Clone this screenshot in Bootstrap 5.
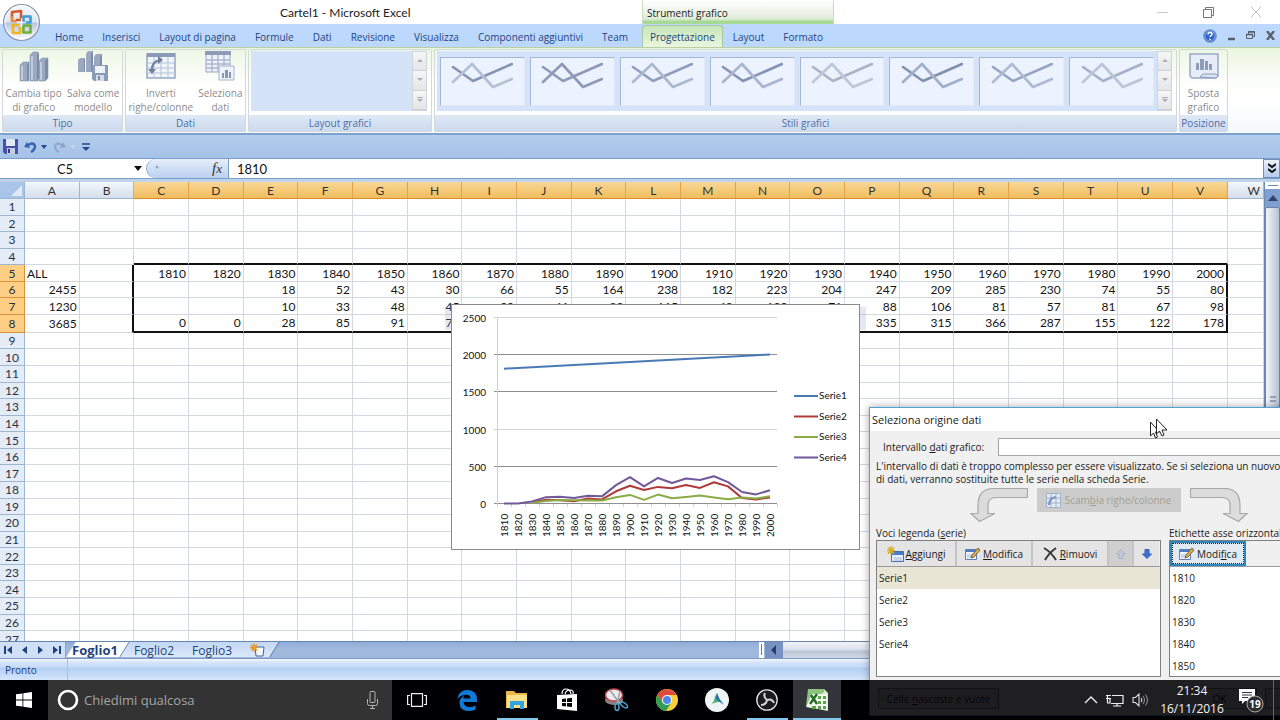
<!DOCTYPE html>
<html lang="it">
<head>
<meta charset="utf-8">
<meta name="viewport" content="width=device-width, initial-scale=1">
<title>Cartel1 - Microsoft Excel</title>
<link href="https://cdn.jsdelivr.net/npm/bootstrap@5.3.0/dist/css/bootstrap.min.css" rel="stylesheet">
<style>
:root{--ui:"Open Sans","Noto Sans",sans-serif;--grid:Lato,"Open Sans",sans-serif}
body{font:10px/14px var(--ui);background:#020308;color:#1a1a1a}
button{font:inherit;color:inherit;background:none;border:0;padding:0}
svg{display:block;flex:none}
/* title bar */
.titlebar{height:24px;background:#fff}
.doc-title{width:642px;padding-left:280px;font:12px/25px var(--grid);color:#222}
.ctx{width:192px;padding:5px 4px 0;line-height:16px;border:solid #c9dcc0;border-width:0 1px;background:linear-gradient(#fff,#eaf1e4 60%,#dbebd2 80%,#a3d891 90%,#a9dc98)}
.winbtns{gap:35px;padding-right:18px}
.orb{left:2px;top:3px;z-index:5}
/* tabs */
.tabstrip{height:23px;background:#bdd8fd;padding-left:46px;gap:1px;color:#1d4580}
.tabstrip a{color:inherit;text-decoration:none;padding:0 9px;line-height:26px}
.tabstrip a.current{background:linear-gradient(#c6e5b8,#eaf6e0);border:1px solid #a9c99c;border-bottom:0;border-radius:3px 3px 0 0;margin:1px 0 0 4px;padding:0 7px;line-height:23px}
.mdi{gap:11px;padding-right:5px}
/* ribbon */
.ribbon{height:88px;padding:1px 2px 1px;gap:2px;background:linear-gradient(#eaf6de,#fbfdf9 35%,#fff 60%,#f6f8fb);border-top:1px solid #bccda0;border-bottom:2px solid #7ea2d0}
.grp{border:1px solid #d3d8dc;border-radius:2px;background:linear-gradient(#edf7e6,#fff 45%);min-width:0}
.grp h2{font:10px/16px var(--ui);margin:0;text-align:center;color:#4a6ea8;background:linear-gradient(#dfe8f5,#ccdaef);white-space:nowrap}
.grp-s{width:121px}.grp-m{width:184px}.grp-p{width:49px;margin-right:50px}
.big{color:#8c8c8c;line-height:14px;text-align:center;flex:auto;padding-bottom:1px}
.big svg{margin:0 auto 4px}
.gallery{background:#d4e3f8;margin:1px 0 4px 2px;min-width:0}
.thumbs{padding:0 3px;gap:5px}
.thumb{flex:1;min-width:0;background:#ecf2fe;border:1px solid #dfe9f9;border-top-color:#a3b6d3;border-left-color:#a3b6d3;margin:6px 0 5px}
.spin{width:15px;margin:1px 4px 4px 0;border:1px solid #d0d4da}
.spin button{flex:1;background:linear-gradient(#f6f6f6,#e4e5e8);border-bottom:1px solid #cdd1d8;display:flex;align-items:center;justify-content:center}
/* quick access, formula bar */
.qat{height:24px;background:linear-gradient(#b1cdec,#a5c2e8);border-bottom:1px solid #7c9cc8;padding-left:3px;gap:6px}
.fbar{height:20px;background:#fff;border-bottom:1px solid #7c9cc8}
.fbar input{font:13px/18px var(--grid);border:0;outline:0;color:#111;background:#fff;min-width:0}
.namebox{width:130px;text-align:center}
.fxcell{width:83px;background:#fff;border-right:1px solid #7c9cc8}
.fxpill{background:linear-gradient(#e6effb,#b9d0f0);border-left:1px solid #8aa6cc;border-radius:10px 0 0 10px;padding:0 6px 0 8px}
.fx{font:italic 15px/18px "Liberation Serif",serif;color:#333}
.expand{width:17px;background:linear-gradient(#eaf1fb,#b5cbea);border:1px solid #6f8fbd}
/* sheet */
.sheetwrap{flex:1 1 0;background:#fff;border-top:3px solid #bfd4ea;min-height:0}
.pane{min-width:0}
.cells{table-layout:fixed;width:100%;height:466px;border-collapse:separate;border-spacing:0;font:12px/14px var(--grid);color:#151515}
.cells th,.cells td{padding:0 2px;text-align:right;vertical-align:middle;white-space:nowrap;overflow:hidden;font-weight:400;border:solid #d2d8e2;border-width:0 1px 1px 0;line-height:13px}
.cells thead th{height:17px;text-align:center;background:linear-gradient(#f3f7fc,#d5deeb);border-color:#9eb6ce;color:#333}
.cells tbody th{text-align:center;background:#e4ecf7;border-color:#9eb6ce;color:#28323e}
.cells thead th.sel{background:linear-gradient(#f9d796,#f1bd5f);border-color:#d8a04d #e2a349 #dc8c28}
.cells tbody th.sel{background:#fdce83;border-color:#d9933a}
.cells thead th.corner{background:#a9c4e9}
.cells .l{text-align:left}
.cells .et{border-bottom:2px solid #111}.cells .er{border-right:2px solid #111}
.cells thead th.cut{text-align:right;padding-right:3px}
.c0{width:25px}.cl{width:36px}
.ghost{left:445px;top:125px;width:421px;height:23px;background:rgba(150,160,205,.25)}
.chart{left:451px;top:122px;width:409px;height:246px;background:#fff;border:1px solid #8a8a8a}
.chart text{font:10px Lato,sans-serif;fill:#111}
.vscroll{width:16px;background:#8fa9d2;border-left:1px solid #6f8ab4;padding-bottom:50px}
.vthumb{flex:1;border:1px solid #6c83a8;border-radius:2px;background:linear-gradient(90deg,#f2f5fa,#cfd7e4 60%,#b4c0d3)}
/* sheet tabs, status */
.sheettabs{height:17px;background:linear-gradient(#8fabd6,#a1b8dd 40%);border-top:1px solid #6885b0;font:12px/17px var(--ui);color:#1f437c;isolation:isolate}
.navs{width:66px;background:#cfe0f7;border-right:1px solid #8aa6cc;padding:0 4px}
.stab{position:relative;padding:0 9px}
.stab::before{content:"";position:absolute;z-index:-1;inset:0 0 1px -8px;transform:skewX(-32deg);background:linear-gradient(#c3d7f3,#dce9fa);border-right:1px solid #5f7fb0}
.stab.on{font-weight:700;padding:0 7px 0 6px;font-size:13px;z-index:1}
.stab.on::before{background:#fff;left:5px}
.hscroll{width:521px}
.statusbar{height:22px;background:linear-gradient(#f2f7fe,#d3e3fa 18%,#cadcf8 35%,#b4d0f6 45%,#c4daf9 75%,#d8e6fb);border-top:1px solid #7d97bf;padding-left:5px;line-height:22px;color:#1d3c70}
.statusbar span{width:63px;border-right:1px solid #a9c2e4}
/* dialog */
.dlg{left:869px;top:407px;width:480px;height:309px;background:#f0f0f0;border:1px solid #4aa3d4;box-shadow:0 0 8px rgba(0,0,0,.35);z-index:10;padding-left:6px}
.dlg-title{height:23px;margin-left:-6px;padding:0 20px 0 2px;background:#fff;font:11px/24px var(--ui)}
.closers{gap:32px}
.dlg-row{padding:7px 8px 0 0}
.dlg label{padding-left:7px;width:122px}
.dlg .range{height:18px;border:1px solid #a5a5a5;background:#fff;min-width:0}
.dlg .note{line-height:13px;white-space:nowrap;overflow:hidden}
.swaprow{gap:9px;height:40px;padding:2px 7px 0 0}
.lists{gap:8px}
.swap{width:144px;height:24px;background:#cccccc;color:#a3a08c}
.lbl{line-height:14px;white-space:nowrap}
.lb{border:1px solid #7f7f7f;background:#fff;height:137px}
.lb-l{width:285px}.lb-r{width:174px}
.lbtools{height:26px;background:#f0f0f0;border-bottom:1px solid #9a9a9a}
.tool{background:#e4e4e4;border-right:2px solid #c4c4c4;gap:2px;width:76px;flex:none}
.tool.wide{width:80px}.tool.arrow{width:25px}.tool.off{background:#cfcfcf}
.tool.focus{background:#e2eaf1;border:2px solid #2c87c0;outline:1px dotted #222;outline-offset:-3px}
.lb li{height:22px;line-height:23px;padding-left:2px}
.lb li.on{background:#e9e6d6}
.dlg-foot{padding:11px 8px 0 2px}
.dbtn{border:1px solid #888;background:#dcdcdc;height:21px;width:75px}
.dbtn.wide{width:121px}
/* taskbar */
.taskbar{height:40px;background:rgba(0,0,3,.87);position:relative;z-index:20;color:#f4f4f4}
.start{width:48px}
.search{width:344px;background:#333;padding:0 12px 0 7px;gap:1px}
.search input{background:none;border:0;outline:0;color:#a5a5a5;font:13px/20px var(--ui);min-width:0}
.search input::placeholder{color:#a5a5a5;opacity:1}
.apps{gap:2px;padding-left:1px}
.app{width:48px;display:flex;align-items:center;justify-content:center;border-bottom:2px solid transparent;border-top:2px solid transparent}
.app.run::after{content:"";position:absolute;bottom:0;width:41px;height:2px;background:#84c8ec}
.app.act{background:#33353b;border-bottom-color:#84c8ec}
.clock{width:70px;font:12px/18px var(--ui);text-align:center}
.edge{width:7px;border-left:1px solid #666}
.cursor{left:1149px;top:418px;z-index:30}
</style>
</head>
<body class="vh-100 d-flex flex-column overflow-hidden position-relative m-0">

<header class="position-relative flex-shrink-0">
  <div class="titlebar d-flex">
    <div class="doc-title flex-shrink-0">Cartel1 - Microsoft Excel</div>
    <div class="ctx flex-shrink-0">Strumenti grafico</div>
    <div class="winbtns d-flex align-items-center ms-auto">
      <button aria-label="Riduci a icona"><svg width="11" height="12"><path d="M0 6.500h11" stroke="#c9c9c9"/></svg></button>
      <button aria-label="Ripristina"><svg width="12" height="12" fill="none" stroke="#777"><path d="M.5 3.500h8v8h-8zM2.500 3.500v-2h8v8h-2"/></svg></button>
      <button aria-label="Chiudi"><svg width="12" height="12"><path d="M1 1l10 10M11 1L1 11" stroke="#c4c4c4"/></svg></button>
    </div>
  </div>
  <button class="orb position-absolute" aria-label="Pulsante Office">
    <svg width="39" height="39" viewBox="0 0 39 39"><defs><linearGradient id="og" x1="0" y1="0" x2="0" y2="1"><stop offset="0" stop-color="#f8fafc"/><stop offset=".48" stop-color="#dfe5ee"/><stop offset=".52" stop-color="#b9c6da"/><stop offset="1" stop-color="#fff"/></linearGradient></defs>
      <circle cx="19.500" cy="19.500" r="18" fill="url(#og)" stroke="#8797b3" stroke-width="1.200"/><circle cx="19.500" cy="19.500" r="16.500" fill="none" stroke="#fff" stroke-opacity=".7"/>
      <g fill="none" stroke-width="2.600" stroke-linejoin="round"><path d="M10 15V9l9-1v9h-5" stroke="#d9582b"/><path d="M10 13v5h4" stroke="#e98a3c"/><path d="M21.500 13.500h7v6h-7z" stroke="#3e9bd5"/><path d="M17 22h-6v8h7v-6" stroke="#f0b323"/><path d="M21.500 22.500h7v7h-7z" stroke="#6fae3b"/></g>
      <path d="M19.500 15v9M15 19.500h9" stroke="#f5f5f0" stroke-width="1.300"/></svg>
  </button>
  <nav class="tabstrip d-flex">
    <a href="#">Home</a><a href="#">Inserisci</a><a href="#">Layout di pagina</a><a href="#">Formule</a><a href="#">Dati</a><a href="#">Revisione</a><a href="#">Visualizza</a><a href="#">Componenti aggiuntivi</a><a href="#">Team</a><a href="#" class="current">Progettazione</a><a href="#">Layout</a><a href="#">Formato</a>
    <div class="mdi d-flex align-items-center ms-auto">
      <button aria-label="Guida"><svg width="14" height="14"><circle cx="7" cy="7" r="6.300" fill="#2e62c8" stroke="#7f93b8"/><circle cx="7" cy="7" r="5" fill="none" stroke="#9fc0f5" stroke-width=".8"/><path d="M5 5.500q0-2 2-2t2 1.700q0 1-1.200 1.600-.8.400-.8 1.200M7 9.500v1.500" stroke="#fff" stroke-width="1.400" fill="none"/></svg></button>
      <button aria-label="Riduci"><svg width="7" height="11"><path d="M0 9h7" stroke="#555e6c" stroke-width="2.500"/></svg></button>
      <button aria-label="Ripristina finestra"><svg width="9" height="9" fill="none" stroke="#555e6c"><path d="M2.500 3V.500h6v5H7M.500 3.500h6v4h-6z"/><path d="M2 1h7M0 3.500h7" stroke-width="1.600"/></svg></button>
      <button aria-label="Chiudi finestra"><svg width="9" height="9"><path d="M1 0l7 9M8 0L1 9" stroke="#5a6270" stroke-width="2.400"/></svg></button>
    </div>
  </nav>
</header>

<section class="ribbon d-flex flex-shrink-0">
  <div class="grp grp-s d-flex flex-column flex-shrink-0">
    <div class="d-flex flex-grow-1">
      <button class="big"><svg width="30" height="31" viewBox="0 0 30 31"><g fill="#9ba9c0" stroke="#8494ae" stroke-width=".6"><path d="M1 14l3-3h6v19H1z"/><path d="M11 4l3-3h5v29h-8z"/><path d="M20 10l3-3h6v20l-3 3h-6z"/></g><path d="M10 11v16l-2 3V14zM20 1v26l-2 3V4zM29 7v20l-3 3V10z" fill="#7c8ca7"/><path d="M2 15h2v14H2zM12 5h2v24h-2zM21 11h2v18h-2z" fill="#c1cbdb"/></svg>Cambia tipo<br>di grafico</button>
      <button class="big"><svg width="30" height="31" viewBox="0 0 30 31"><g fill="#9ba9c0"><path d="M0 9l2-2h5v14H0z"/><path d="M8 3l2-3h5v21H8z"/><path d="M16 6l2-3h6v13h-8z"/></g><path d="M7 7v13l-1 1V9zM15 0v20l-2 1V3zM24 3v13h-2V6z" fill="#7c8ca7"/><path d="M14 14h16v16H16l-2-2z" fill="#8b9ab5"/><path d="M17 15h10v7H17z" fill="#eef2f9"/><path d="M18 24h8v6h-8z" fill="#d4dcea"/><path d="M20 25h2v4h-2z" fill="#7f8fab"/></svg>Salva come<br>modello</button>
    </div><h2>Tipo</h2>
  </div>
  <div class="grp grp-s d-flex flex-column flex-shrink-0">
    <div class="d-flex flex-grow-1">
      <button class="big"><svg width="30" height="31" viewBox="0 0 30 31"><path d="M1 3h28v24H1z" fill="#f0f4fb" stroke="#98a7c2" stroke-width="1.500"/><path d="M1 2h28v4H1z" fill="#8c9bb8"/><path d="M1 12h28M1 17h28M1 22h28M8 6v21M15 6v21M22 6v21" stroke="#b5c1d6"/><path d="M6 20q-1-9 8-11" fill="none" stroke="#6f809e" stroke-width="2"/><path d="M12 5l5 4-5 4zM2 18l4 5 4-5z" fill="#6f809e"/></svg>Inverti<br>righe/colonne</button>
      <button class="big"><svg width="30" height="31" viewBox="0 0 30 31"><path d="M1 1h24v20H1z" fill="#eff3fb" stroke="#98a7c2"/><path d="M0 0h26v4H0z" fill="#8c9bb8"/><path d="M1 9h24M1 13h24M1 17h24M7 4v17M13 4v17M19 4v17" stroke="#aab7cf" stroke-width="1.400"/><path d="M14 15h15v14H14z" fill="#eef3fb" stroke="#a6b4cc"/><path d="M17 22h2v5h-2zM20 19h3v8h-3zM24 21h2v6h-2z" fill="#8897b3"/></svg>Seleziona<br>dati</button>
    </div><h2>Dati</h2>
  </div>
  <div class="grp grp-m d-flex flex-column flex-shrink-0">
    <div class="d-flex flex-grow-1">
      <div class="gallery flex-grow-1"></div>
      <div class="spin d-flex flex-column" data-spin></div>
    </div><h2>Layout grafici</h2>
  </div>
  <div class="grp flex-grow-1 d-flex flex-column">
    <div class="d-flex flex-grow-1">
      <div class="gallery thumbs flex-grow-1 d-flex" id="styles"></div>
      <div class="spin d-flex flex-column" data-spin></div>
    </div><h2>Stili grafici</h2>
  </div>
  <div class="grp grp-p d-flex flex-column flex-shrink-0">
    <button class="big"><svg width="30" height="31" viewBox="0 0 30 31"><path d="M1 3h28v22l-2 2H3l-2-2z" fill="#e6edf9" stroke="#98a8c6" stroke-width="1.500"/><path d="M7 12h3v7H7zM11 8h4v11h-4zM16 10h3v9h-3zM20 13h3v6h-3z" fill="#8e9dba"/><path d="M11 26l3-3h13l2 2-2 2z" fill="#dbe4f4" stroke="#8b9bba"/></svg>Sposta<br>grafico</button>
    <h2>Posizione</h2>
  </div>
</section>

<div class="qat d-flex align-items-center flex-shrink-0">
  <button aria-label="Salva"><svg width="15" height="15"><path d="M0 0h15v15H2l-2-2z" fill="#4a4fa8"/><path d="M3 0h9v7H3z" fill="#dfe6f6"/><path d="M4 9h8v6H4z" fill="#c5cbe2"/><path d="M5 10h2v4H5z" fill="#34397f"/></svg></button>
  <button aria-label="Annulla" class="d-flex align-items-center gap-1"><svg width="13" height="13"><path d="M3 6q6-5 8 0 0 4-4 6" fill="none" stroke="#3a62b4" stroke-width="2.400"/><path d="M0 7l6 1-3-6z" fill="#3a62b4"/></svg><svg width="6" height="4"><path d="M0 0h6L3 4z" fill="#234a8a"/></svg></button>
  <button aria-label="Ripeti" class="d-flex align-items-center gap-1"><svg width="13" height="13"><path d="M10 6Q4 1 2 6q0 4 4 6" fill="none" stroke="#8ea5c6" stroke-width="2"/><path d="M13 7l-6 1 3-6z" fill="#8ea5c6"/></svg><svg width="6" height="4"><path d="M0 0h6L3 4z" fill="#c9d6e8"/></svg></button>
  <button aria-label="Personalizza"><svg width="8" height="8"><path d="M0 1h8" stroke="#234a8a" stroke-width="1.500"/><path d="M0 4h8L4 8z" fill="#234a8a"/></svg></button>
</div>

<div class="fbar d-flex flex-shrink-0">
  <input class="namebox" value="C5" aria-label="Casella nome">
  <button class="d-flex align-items-center px-1" aria-label="Elenco nomi"><svg width="8" height="5"><path d="M0 0h8L4 5z" fill="#111"/></svg></button>
  <div class="fxcell d-flex"><div class="fxpill flex-grow-1 d-flex justify-content-between"><svg class="mt-1" width="5" height="8"><circle cx="2" cy="4" r="1.500" fill="#8fa9cf"/></svg><button class="fx" aria-label="Inserisci funzione">f<small>x</small></button></div></div>
  <input class="flex-grow-1 ps-2" value="1810" aria-label="Barra della formula">
  <button class="expand d-flex align-items-center justify-content-center" aria-label="Espandi"><svg width="8" height="11"><path d="M0 1l4 3 4-3M0 6l4 3 4-3" fill="none" stroke="#111" stroke-width="2"/></svg></button>
</div>

<main class="sheetwrap d-flex overflow-hidden">
  <div class="pane flex-grow-1 overflow-hidden position-relative">
    <table class="cells" id="cells"></table>
    <div class="ghost position-absolute"></div>
    <div class="chart position-absolute"><svg id="chart" width="407" height="244" viewBox="452 305 407 244" role="img" aria-label="Grafico a linee"></svg></div>
  </div>
  <div class="vscroll d-flex flex-column">
    <svg width="15" height="25"><path d="M0 0h15v7H0z" fill="#fff"/><path d="M3 3.500h10" stroke="#6c8cb8"/><path d="M0 7h15v18H0z" fill="#7f9fd0"/><path d="M3 19l5-6 5 6z" fill="#34416b"/></svg>
    <div class="vthumb d-flex align-items-center justify-content-center"><svg width="6" height="7"><path d="M0 1h6M0 5h6" stroke="#7f8da6" stroke-width="1.500"/></svg></div>
  </div>
</main>

<div class="sheettabs d-flex flex-shrink-0">
  <div class="navs d-flex align-items-center justify-content-between flex-shrink-0">
    <button aria-label="Primo"><svg width="8" height="8"><path d="M8 0v8L3 4zM0 0h2v8H0z" fill="#1f437c"/></svg></button>
    <button aria-label="Precedente"><svg width="6" height="8"><path d="M5 0v8L0 4z" fill="#1f437c"/></svg></button>
    <button aria-label="Successivo"><svg width="6" height="8"><path d="M1 0v8l5-4z" fill="#1f437c"/></svg></button>
    <button aria-label="Ultimo"><svg width="8" height="8"><path d="M0 0v8l5-4zM6 0h2v8H6z" fill="#1f437c"/></svg></button>
  </div>
  <button class="stab on">Foglio1</button><button class="stab">Foglio2</button><button class="stab">Foglio3</button>
  <button class="stab" aria-label="Nuovo foglio"><svg width="16" height="14"><path d="M5 4h9l-1 9H6z" fill="#f5f8fd" stroke="#42639b"/><path d="M4 0v9M0 4.500h8M1 1.500l6 6M7 1.500l-6 6" stroke="#e59a2c" stroke-width="1.300"/></svg></button>
  <div class="hscroll ms-auto d-flex flex-shrink-0">
    <svg width="24" height="16"><path d="M0 0h5v16H0z" fill="#fff"/><path d="M2.500 2v11" stroke="#5f7fb0"/><path d="M6 0h18v16H6z" fill="#7693c4"/><path d="M17 3v10l-5-5z" fill="#2b3c66"/></svg>
    <div class="flex-grow-1" style="background:linear-gradient(#f1f3f7,#dde2ea 45%,#bcc6d6 60%,#d2d9e5)"></div>
  </div>
</div>
<div class="statusbar d-flex flex-shrink-0"><span>Pronto</span></div>

<section class="dlg position-absolute" role="dialog" aria-label="Seleziona origine dati">
  <div class="dlg-title d-flex justify-content-between"><span>Seleziona origine dati</span><span class="closers d-flex"><button>?</button><button>×</button></span></div>
  <div class="dlg-row d-flex align-items-center"><label for="rng">Intervallo <u>d</u>ati grafico:</label><input id="rng" class="range flex-grow-1"></div>
  <p class="note mb-0 mt-1">L'intervallo di dati è troppo complesso per essere visualizzato. Se si seleziona un nuovo intervallo<br>di dati, verranno sostituite tutte le serie nella scheda Serie.</p>
  <div class="swaprow d-flex justify-content-center">
    <svg width="58" height="34"><path d="M57.500.500v9H26q-8 0-8 8v8h7L9.500 33.500 1 25.500h7v-8Q8 .500 24 .500z" fill="#dcdcdc" stroke="#a8a8a8" stroke-width="1.200"/></svg>
    <button class="swap d-flex align-items-center justify-content-center gap-1" disabled><svg width="15" height="15"><path d="M.5.500h14v14H.500z" fill="#e5ebf3" stroke="#9fb1cc"/><path d="M0 5h15M0 10h15M5 0v15M10 0v15" stroke="#9fb1cc"/><path d="M3 12q0-7 7-8" fill="none" stroke="#7b93bd" stroke-width="2"/></svg><span>Scam<u>b</u>ia righe/colonne</span></button>
    <svg width="58" height="34"><path d="M.500.500v9H32q8 0 8 8v8h-7l15.500 8 8.500-8h-7v-8Q50 .500 34 .500z" fill="#dcdcdc" stroke="#a8a8a8" stroke-width="1.200"/></svg>
  </div>
  <div class="lists d-flex">
    <div><div class="lbl">Voci legenda (<u>s</u>erie)</div>
      <div class="lb lb-l">
        <div class="lbtools d-flex">
          <button class="tool wide d-flex align-items-center justify-content-center"><svg width="17" height="16"><path d="M4.500 5.500h12v10h-12z" fill="#eaf1fb" stroke="#4670b0"/><path d="M5 6h11v3H5z" fill="#4a7bc8"/><path d="M7 12h8M7 14h8" stroke="#9db6dc"/><path d="M4 0v9M0 4.500h8M1 1.500l6 6M7 1.500l-6 6" stroke="#d8ae1c" stroke-width="1.400"/></svg><span><u>A</u>ggiungi</span></button>
          <button class="tool d-flex align-items-center justify-content-center" data-edit><span><u>M</u>odifica</span></button>
          <button class="tool d-flex align-items-center justify-content-center"><svg width="15" height="14"><path d="M1 1q7 4 12 12M13 1Q6 6 2 13" stroke="#3a3a3a" stroke-width="2" fill="none"/></svg><span><u>R</u>imuovi</span></button>
          <button class="tool arrow off d-flex align-items-center justify-content-center" aria-label="Su"><svg width="10" height="10"><path d="M5 .5L9.500 5H7v4.500H3V5H.500z" fill="#c3c9d6" stroke="#a9b1c4"/></svg></button>
          <button class="tool arrow d-flex align-items-center justify-content-center border-0" aria-label="Giù"><svg width="10" height="10"><path d="M5 9.500L.500 5H3V.500h4V5h2.500z" fill="#3f6fd6" stroke="#345cb4"/></svg></button>
        </div>
        <ul class="list-unstyled mb-0"><li class="on">Serie1</li><li>Serie2</li><li>Serie3</li><li>Serie4</li></ul>
      </div></div>
    <div><div class="lbl">Etichette asse orizzontale (categorie)</div>
      <div class="lb lb-r">
        <div class="lbtools d-flex"><button class="tool focus d-flex align-items-center justify-content-center" data-edit><span>Modi<u>f</u>ica</span></button></div>
        <ul class="list-unstyled mb-0 ps-0"><li>1810</li><li>1820</li><li>1830</li><li>1840</li><li>1850</li></ul>
      </div></div>
  </div>
  <div class="dlg-foot d-flex justify-content-between"><button class="dbtn wide">Celle <u>n</u>ascoste e vuote</button><span class="d-flex gap-2"><button class="dbtn">OK</button><button class="dbtn">Annulla</button></span></div>
</section>

<footer class="taskbar d-flex flex-shrink-0">
  <button class="start d-flex align-items-center justify-content-center" aria-label="Start"><svg width="16" height="16" fill="#fff"><path d="M0 2.300l6.500-.9v6.100H0zM7.300 1.300L16 0v7.500H7.300zM0 8.400h6.500v6.200L0 13.700zM7.300 8.400H16V16l-8.700-1.200z"/></svg></button>
  <div class="search d-flex align-items-center flex-shrink-0">
    <svg width="26" height="26"><circle cx="13" cy="13" r="9" fill="none" stroke="#fff" stroke-width="2.600"/></svg>
    <input class="flex-grow-1" placeholder="Chiedimi qualcosa" aria-label="Chiedimi qualcosa">
    <svg width="15" height="18" fill="none" stroke="#b5b5b5"><rect x="5" y=".5" width="5" height="11" rx="1"/><path d="M2.500 8v4.500q0 2 2 2h6q2 0 2-2V8M7.500 14.500v3M5 17.500h5"/></svg>
  </div>
  <div class="apps d-flex">
    <button class="app" aria-label="Visualizzazione attività"><svg width="20" height="14" fill="none" stroke="#eee" stroke-width="1.200"><path d="M4.500.600h11v12.800h-11zM3 2.500H.600v9H3M17 2.500h2.400v9H17"/></svg></button>
    <button class="app" aria-label="Edge"><svg width="20" height="21" viewBox="0 0 20 21"><path d="M0 9Q2 0 10.500 0 20 0 20 10v2H6.500q.5 5 6 5 3.500 0 6-1.600v4Q15.500 21 11.500 21 3 21 2.500 13 2.500 8 7.500 5.500 6.500 6.500 6.300 8.500h7.200Q13.500 4.800 9.500 4.800 4 4.800 0 9z" fill="#0f7ad8"/></svg></button>
    <button class="app run" aria-label="Esplora file"><svg width="22" height="20"><path d="M0 1h8l2 2h11v15H0z" fill="#e8b84a"/><path d="M1 5h20v13H1z" fill="#fbe08a"/><path d="M4 19v-8h14v8h-4v-4H8v4z" fill="#2fa6e0"/></svg></button>
    <button class="app" aria-label="Store"><svg width="22" height="24"><path d="M1 7l20-1v17L1 21z" fill="#fff"/><path d="M6 6q0-5 4-5t5 5M9 6q1-4 5-4t3 4" fill="none" stroke="#fff" stroke-width="1.200"/><path d="M6 11l4-.5V14H6zM11 10.400l5-.6V14h-5zM6 15h4v3.400L6 18zM11 15h5v4l-5-.5z" fill="#05060a"/></svg></button>
    <button class="app" aria-label="Strumento di cattura"><svg width="24" height="24"><ellipse cx="9" cy="12" rx="9" ry="5" fill="#8c8084"/><ellipse cx="9" cy="7" rx="8.500" ry="6" fill="#f0eaea" stroke="#c84650" stroke-width="1.500"/><path d="M5 2l10 14M15 3l-3 13" stroke="#98a5b3" stroke-width="1.600"/><ellipse cx="12" cy="19" rx="2" ry="3.500" fill="none" stroke="#4aa0c8" stroke-width="1.500"/><ellipse cx="19" cy="17" rx="4" ry="2" transform="rotate(35 19 17)" fill="none" stroke="#4aa0c8" stroke-width="1.500"/></svg></button>
    <button class="app" aria-label="Chrome"><svg width="22" height="22" viewBox="0 0 22 22"><circle cx="11" cy="11" r="11" fill="#f9cf3a"/><path d="M1.500 5.500A11 11 0 0 0 10 22l5.300-8.500H6.500z" fill="#2f9e57"/><path d="M1.500 5.500l4.800 8L11 6h9.500A11 11 0 0 0 1.500 5.500z" fill="#dd4b3e"/><circle cx="11" cy="11" r="5" fill="#fff"/><circle cx="11" cy="11" r="4" fill="#4a87ee"/></svg></button>
    <button class="app" aria-label="Applicazione"><svg width="24" height="24"><circle cx="12" cy="12" r="12" fill="#f1f4f4"/><path d="M5 17q4-2 5-8l2-4q2 7 7 11-4-3-7-2-3 0-7 3z" fill="#2a9d8f"/><path d="M12 5q2 7 7 12-5-3-8-7z" fill="#2c6fae"/><path d="M5 17q4-2 5-6l3 3q-4 0-8 3z" fill="#54b86a"/></svg></button>
    <button class="app run" aria-label="OBS"><svg width="22" height="22"><circle cx="11" cy="11" r="10.200" fill="#1b1b1e" stroke="#e6e6e6" stroke-width="1.300"/><path d="M9 4q-2 4 2 7 M11 11q5-2 7 3M11 11q-1 5-6 5" fill="none" stroke="#d5d5d5" stroke-width="2"/></svg></button>
    <button class="app act" aria-label="Excel"><svg width="24" height="22"><path d="M3 0h16l4 4v18l-20-4z" fill="#d6ecc8"/><path d="M3 0h16v3L1 17z" fill="#8cc47c"/><path d="M7 5h15v16L1 18z" fill="#f4faef"/><path d="M13 7h3v3h-3zM18 7h3v3h-3zM13 12h3v3h-3zM18 12h3v3h-3zM7 17h4v3H7zM13 17h3v3h-3zM18 17h3v3h-3z" fill="#5ba34a"/><path d="M6 6l6 9M12 5l-7 10" stroke="#27692a" stroke-width="2.400"/></svg></button>
  </div>
  <div class="ms-auto d-flex align-items-center gap-2">
    <svg width="14" height="8"><path d="M1 7l6-6 6 6" fill="none" stroke="#eee" stroke-width="1.400"/></svg>
    <svg width="18" height="13" fill="none" stroke="#eee" stroke-width="1.200"><path d="M6 1.500h11v8H5M7 12h8M11 9.500V12M0 1.500h5M0 4.500h5M1.500 1v8M4 4v5H1"/></svg>
    <svg width="17" height="14" fill="none" stroke="#ddd" stroke-width="1.100"><path d="M1 4.500h2.500L7 1v12L3.500 9.500H1zM9 5q1.500 2 0 4"/><path d="M11 3q3 4 0 8M13.500 1.500q4 5.500 0 11" stroke="#888"/></svg>
    <div class="clock">21:34<br>16/11/2016</div>
    <svg class="ms-1" width="26" height="26"><path d="M0 2h16v12H6l-3 3v-3H0z" fill="#fff"/><path d="M3 5.500h10M3 8h10M3 10.500h6" stroke="#333"/><circle cx="16" cy="17" r="8" fill="#2d2d2d" stroke="#aaa"/><text x="16" y="21" text-anchor="middle" font-family="Open Sans" font-size="10" font-weight="700" fill="#fff">19</text></svg>
    <div class="edge align-self-stretch"></div>
  </div>
</footer>

<svg class="cursor position-absolute" width="20" height="24" fill="#fff" stroke="#222"><path d="M1.500 4v14l3-3 2 5 2-1-2-5h4z"/><path d="M7.500 1v15l3-3 2.500 5 2-1-2-5h5z"/></svg>

<script src="https://cdn.jsdelivr.net/npm/bootstrap@5.3.0/dist/js/bootstrap.bundle.min.js"></script>
<script>
const years = Array.from({length: 20}, (_, i) => 1810 + 10 * i);
const a = ['', '', 18, 52, 43, 30, 66, 55, 164, 238, 182, 223, 204, 247, 209, 285, 230, 74, 55, 80];
const b = ['', '', 10, 33, 48, 45, 39, 41, 83, 115, 48, 120, 71, 88, 106, 81, 57, 81, 67, 98];
const sum = a.map((v, i) => (+v) + (+b[i]));
const data = {5: ['ALL', '', ...years], 6: [2455, '', ...a], 7: [1230, '', ...b], 8: [3685, '', ...sum]};

// worksheet
let h = '<colgroup><col class="c0">' + '<col>'.repeat(22) + '<col class="cl"></colgroup><thead><tr><th class="corner"><svg class="ms-auto" width="12" height="12"><path d="M12 1v11H1z" fill="#dfe9f7"/></svg></th>';
for (let c = 0; c < 23; c++) h += `<th class="${c > 1 && c < 22 ? 'sel' : ''}${c == 22 ? 'cut' : ''}">${String.fromCharCode(65 + c)}</th>`;
h += '</tr></thead><tbody>';
for (let r = 1; r < 28; r++) {
  const on = r > 4 && r < 9;
  h += `<tr><th class="${on ? 'sel' : ''}">${r}</th>`;
  for (let c = 0; c < 23; c++) {
    const k = [];
    if (c > 1 && c < 22 && (r == 4 || r == 8)) k.push('et');
    if (on && (c == 1 || c == 21)) k.push('er');
    if (r == 5 && c == 0) k.push('l');
    h += `<td class="${k.join(' ')}">${data[r]?.[c] ?? ''}</td>`;
  }
  h += '</tr>';
}
document.getElementById('cells').innerHTML = h + '</tbody>';

// line chart
const X = i => 504 + 14 * i, Y = v => 503.5 - v * 0.0745;
let s = '';
for (let v = 0; v <= 2500; v += 500) {
  const y = Math.floor(Y(v)) + .5;
  s += `<path d="M494 ${y}H777" stroke="${v == 1000 || v == 2500 ? '#d4d4d4' : '#8e8e8e'}"/><text x="486" y="${y + 4}" text-anchor="end">${v}</text>`;
}
s += '<path d="M497.500 317V504" stroke="#cfcfcf"/>';
for (let i = 0; i <= 20; i++) s += `<path d="M${497.5 + 14 * i} 504v3" stroke="#cfcfcf"/>`;
years.forEach((y, i) => s += `<text transform="translate(${X(i) + 4} 537) rotate(-90)">${y}</text>`);
[[years, '#4a7ab5'], [a, '#b03a38'], [b, '#8aab45'], [sum, '#71589a']].forEach(([d, col], n) => {
  s += `<polyline fill="none" stroke-width="2" stroke-linejoin="round" stroke="${col}" points="${d.map((v, i) => v === '' ? '' : X(i) + ',' + Y(v)).join(' ')}"/>`;
  s += `<path d="M794 ${396 + 20.5 * n}h24" stroke="${col}" stroke-width="2"/><text x="819" y="${399 + Math.round(20.5 * n)}">Serie${n + 1}</text>`;
});
document.getElementById('chart').innerHTML = s;

// style gallery
const shades = [['#8494b2', '#b3bfd3'], ['#8c9ab8', '#8c9ab8'], ['#8f9fbb', '#aab8cf'], ['#8494b2', '#a8b5cc'], ['#a9b4c6', '#bcc7d8'], ['#8090ae', '#a1b0ca'], ['#95a5c0', '#adbbd2'], ['#a3b1c9', '#b9c5d8']];
document.getElementById('styles').innerHTML = shades.map(([p, q]) => `<button class="thumb" aria-label="Stile"><svg class="mx-auto" width="62" height="46" fill="none" stroke-width="2.600" stroke-linecap="round" stroke-linejoin="round"><path d="M2 8l20 14L61 5" stroke="${p}"/><path d="M2 23L21 5l21 23 19-8" stroke="${q}"/></svg></button>`).join('');
document.querySelectorAll('[data-spin]').forEach(e => e.innerHTML = ['M0 3h6L3 0z', 'M0 0h6L3 3z', 'M0 0h6v1H0zM0 2h6L3 5z'].map(p => `<button aria-label="Scorri"><svg width="6" height="5"><path d="${p}" fill="#a9adb5"/></svg></button>`).join(''));
document.querySelectorAll('[data-edit]').forEach(e => e.insertAdjacentHTML('afterbegin', '<svg width="16" height="14"><path d="M.5 2.500h11v10H.500z" fill="#f2f6fc" stroke="#5d7fb5"/><path d="M1 3h10v2H1z" fill="#4a7bc8"/><path d="M2 8h5M2 10h4" stroke="#9db6dc"/><path d="M6 11l1-3 6-7 2 2-6 7z" fill="#e2b04a" stroke="#5b4a2a" stroke-width=".8"/></svg>'));
</script>
</body>
</html>
